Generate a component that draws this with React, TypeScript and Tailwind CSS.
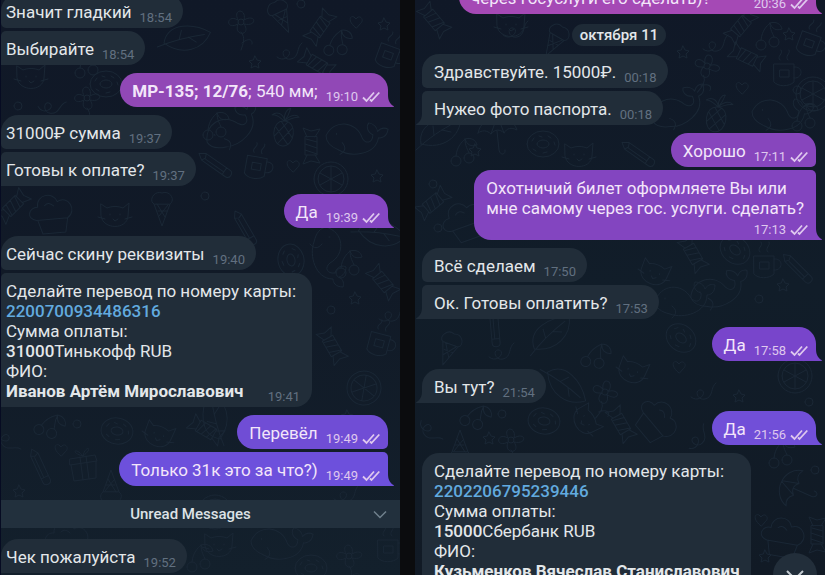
import type { ReactNode } from 'react'
import { clsx } from 'clsx'

type Position = 'single' | 'first' | 'last'

interface Message {
  id: string
  time: string
  content: ReactNode
  own?: boolean
  position?: Position
  // Extra classes: bubble tint and spacing to the previous message
  className?: string
  layout?: 'inline' | 'stacked' | 'overlay'
}

const DOODLES = {
  star: 'M0-6 2-2 6-1 3 2 4 6 0 4-4 6-3 2-6-1-2-2Z',
  heart: 'M0 6C-9-1-6-7-2-5L0-3C3-8 9-3 5 1Z',
  donut: 'M-16 0a16 13 0 1 0 32 0a16 13 0 1 0-32 0M-6 0a6 4 0 1 0 12 0a6 4 0 1 0-12 0M-11-3l2-3M-4-8l3 1M5-8l3 2M11-2l1 3M-10 5l3 2M0 9l4-1',
  gift: 'M-13-7 12-11 14-5-13-1ZM-12-1-9 15 13 12 13-5M-3-9 0 14M3-10 6 13M0-10C-8-20-13-13 0-10C2-21 12-19 0-10',
  pencil: 'M-4-16 0-22 4-16 4 13C4 18-4 18-4 13ZM-4-16 0-14 4-16M-4 9H4M-1-13V8',
  cone: 'M-8-4 0 18 8-4M-8-4C-14-7-8-18 0-15C8-18 14-8 8-4ZM-4 3 5 3M-5-4 3 9M6-3-3 8',
  pineapple: 'M0-7C14-7 12 18 0 18C-12 18-14-7 0-7M-8 0 5 16M-3-6 9 9M8 0-5 16M3-6-9 9M0-7C-2-15-9-16-13-12C-8-13-5-10 0-7C-2-14 2-20 5-20C4-15 3-12 0-7C5-14 11-15 14-12C8-12 6-9 0-7',
  flower: 'M-3 0a3 3 0 1 0 6 0a3 3 0 1 0-6 0M-3-2C-9-14 6-14 3-2C15-9 17 5 3 2C11 14-8 15-3 2C-16 9-15-9-3-2M0 10C5 16 2 22 0 28M1 21C8 15 12 18 11 22',
  candy: 'M-9-6 9-6 9 6-9 6ZM-9-4-17-9-15 0-18 8-9 4M9-4 17-9 15 0 18 8 9 4M-4-6-7 5M2-6-2 6M8-6 4 6',
  umbrella: 'M-19 3C-15-17 14-19 20 0C14-3 10-2 7 3C3-1-2-1-6 4C-10 0-15 0-19 3ZM0-13-6 4M1-13 7 3M0 1 2 20C3 26 9 25 8 20',
  slice: 'M-17 0a17 17 0 1 0 34 0a17 17 0 1 0-34 0M-13 0a13 13 0 1 0 26 0a13 13 0 1 0-26 0M0-13V13M-11-6 11 6M11-6-11 6',
  cloud: 'M-17 8C-28 6-24-6-15-5C-16-18 2-20 5-9C16-15 25 1 14 8M-17 8H14M-8-6C-5-9-2-8 1-5M-16 8-12 22 11 22 14 8',
  cat: 'M-14-10-8-6C-3-8 3-8 8-6L14-11 13 2C12 16-12 16-14 2ZM-5 0V1M5 0V1M-2 5 0 7 3 5M-17 3-10 5M17 3 10 5',
  cup: 'M-11-8H9V10C4 15-7 15-11 10ZM9-5C19-6 18 7 9 6M-5-12C-9-16-1-18-4-22M3-12C-1-16 6-18 4-22M-5-2H4V5H-5Z',
  whale: 'M-25 2C-20-16 2-18 11-2C16 4 22 1 21-7C14-9 13-15 15-18C20-18 24-15 25-11C28-16 32-16 35-15C35-7 30-5 27-5C27 13 3 19-10 14C-19 12-24 8-25 2ZM-15-2V-1M-8 6C-3 10-3 14-8 18',
  leaf: 'M-18 12C-22-9 3-17 22-14C21 5 4 18-18 12ZM-23 18C-9 5 2-2 17-10M-5 3-6-6M3-2 12 0',
  cherry: 'M-8 7a5 5 0 1 0 10 0a5 5 0 1 0-10 0M5 4a5 5 0 1 0 10 0a5 5 0 1 0-10 0M-3 2C-2-8 3-12 6-15C6-8 9-4 10-1M6-15C12-17 17-14 18-9C12-7 8-9 6-15',
  loop: 'M-12 5C-4 12 5 0-2-2C-9-3-6 9 2 7C11 5 7-5 13-9',
  ring: 'M-4 0a4 4 0 1 0 8 0a4 4 0 1 0-8 0',
}

type DoodleName = keyof typeof DOODLES
type Placement = [DoodleName, number, number, number]

const LEFT_DOODLES: Placement[] = [
  ['flower', 240, 22, 0], ['cone', 280, 16, -25], ['candy', 319, 27, -55], ['ring', 300, 4, 0],
  ['loop', 288, 52, 0], ['cherry', 332, 44, 10], ['star', 383, 24, 0], ['star', 254, 62, 0],
  ['heart', 355, 22, 0], ['leaf', 184, 38, 20], ['candy', 316, 64, 30], ['cup', 388, 54, 20],
  ['cat', 30, 76, 0], ['cherry', 82, 66, 0], ['donut', 105, 84, 0], ['loop', 50, 106, 20],
  ['ring', 17, 106, 0], ['flower', 86, 98, 0], ['whale', 228, 130, -25], ['pineapple', 283, 128, 5],
  ['whale', 350, 138, 10], ['candy', 310, 146, 90], ['pencil', 216, 166, -55], ['cup', 256, 165, 10],
  ['heart', 292, 166, 0], ['slice', 330, 179, 0], ['star', 376, 176, 0], ['cherry', 210, 128, 0],
  ['candy', 12, 206, -45], ['cloud', 52, 211, -5], ['cat', 114, 214, 0], ['cone', 161, 208, 0],
  ['ring', 204, 196, 0], ['pencil', 245, 230, -30], ['donut', 290, 260, 80], ['whale', 327, 252, 90],
  ['leaf', 379, 233, 40], ['candy', 382, 282, 50], ['star', 354, 298, 0], ['ring', 330, 310, 0],
  ['cherry', 343, 266, 0], ['loop', 390, 314, 0], ['candy', 331, 346, 60], ['cup', 379, 342, 15],
  ['slice', 363, 388, 10], ['star', 346, 416, 0], ['leaf', 214, 418, -70], ['cherry', 44, 425, 30],
  ['ring', 76, 424, 0], ['donut', 116, 431, 10], ['cat', 158, 434, 20], ['pencil', 40, 469, -25],
  ['gift', 82, 466, 0], ['star', 18, 491, 0], ['heart', 60, 450, 0], ['cone', 110, 488, 180],
  ['loop', 7, 440, 70], ['candy', 205, 430, 30], ['cloud', 68, 538, 0], ['whale', 275, 543, 10],
  ['flower', 348, 556, 0], ['cat', 218, 544, 0], ['cup', 388, 548, 0], ['donut', 310, 568, 0],
  ['cherry', 194, 560, 0], ['loop', 345, 494, 0], ['slice', 214, 512, 0],
]

const RIGHT_DOODLES: Placement[] = [
  ['candy', 19, 20, 50], ['loop', 100, 30, 0], ['cat', 96, 24, 0], ['cone', 140, 40, 30],
  ['candy', 326, 26, -50], ['cherry', 349, 38, 0], ['star', 268, 52, 0], ['loop', 300, 44, 0],
  ['star', 374, 34, 0], ['cup', 395, 42, 20], ['candy', 332, 57, 25], ['flower', 292, 66, 20],
  ['cup', 370, 72, 0], ['ring', 382, 90, 0], ['heart', 327, 88, 0], ['pineapple', 302, 114, 10],
  ['whale', 260, 110, -20], ['whale', 362, 114, 10], ['slice', 398, 94, 0], ['cherry', 385, 119, 0],
  ['leaf', 24, 132, 0], ['cherry', 44, 154, 0], ['donut', 128, 144, 0], ['cat', 164, 154, 0],
  ['umbrella', 82, 130, 0], ['star', 60, 150, 0], ['pencil', 225, 155, -55], ['ring', 18, 184, 0],
  ['candy', 18, 203, -40], ['cloud', 50, 218, -20], ['ring', 23, 228, 0], ['candy', 278, 254, 60],
  ['donut', 320, 250, 40], ['cup', 350, 264, 0], ['pencil', 384, 270, -45], ['whale', 265, 300, 0],
  ['cat', 240, 272, 20], ['whale', 300, 291, -10], ['star', 368, 285, 0], ['ring', 344, 299, 0],
  ['leaf', 135, 334, -10], ['pencil', 80, 330, -5], ['cone', 34, 348, 20], ['cherry', 176, 356, 20],
  ['loop', 86, 352, 0], ['donut', 266, 338, 40], ['cat', 218, 370, 20], ['heart', 264, 367, 0],
  ['star', 324, 396, 0], ['slice', 380, 376, 0], ['loop', 288, 392, 0], ['flower', 190, 392, 20],
  ['leaf', 150, 385, 70], ['ring', 394, 402, 0], ['cherry', 56, 416, 30], ['ring', 87, 414, 0],
  ['donut', 129, 421, 10], ['cat', 172, 420, 60], ['loop', 15, 430, 70], ['cone', 45, 448, 180],
  ['flower', 96, 440, 0], ['cloud', 245, 420, 50], ['star', 74, 438, 0], ['loop', 282, 438, -30],
  ['cherry', 362, 456, 0], ['umbrella', 378, 488, -60], ['ring', 400, 470, 0], ['cloud', 370, 535, 10],
  ['candy', 402, 535, 90], ['heart', 346, 520, 0], ['candy', 206, 424, 60], ['star', 350, 556, 0],
]

function Wallpaper({ items }: { items: Placement[] }) {
  return (
    <svg className="pointer-events-none absolute inset-0 h-full w-full" aria-hidden="true">
      <g fill="none" stroke="#1a2735" strokeLinecap="round" strokeLinejoin="round">
        {items.map(([name, x, y, angle], index) => (
          <path key={index} d={DOODLES[name]} transform={`translate(${x} ${y}) rotate(${angle})`} />
        ))}
      </g>
    </svg>
  )
}

function ReadChecks() {
  return (
    <svg
      className="h-3 w-[18px]"
      viewBox="0 0 18 12"
      fill="none"
      stroke="currentColor"
      strokeWidth="1.8"
      role="img"
      aria-label="Прочитано"
    >
      <path d="M1 6.5 4.5 10 12 1.5M8 8.5 9.5 10 17.3 1.5" />
    </svg>
  )
}

function Tail({ own }: { own?: boolean }) {
  return (
    <svg
      className={clsx('absolute bottom-0 h-3 w-1.5', own ? '-right-1.5' : '-left-1.5 -scale-x-100')}
      viewBox="0 0 6 12"
      fill="currentColor"
      aria-hidden="true"
    >
      <path d="M0 0C0 6 2 9 6 11.3L5.5 12H0Z" />
    </svg>
  )
}

function Bubble({ time, content, own, position = 'single', className, layout = 'inline' }: Message) {
  const hasTail = position !== 'first'
  const corners = own
    ? clsx('rounded-l-[17px]', position === 'last' ? 'rounded-tr-[5px]' : 'rounded-tr-[17px]', position === 'first' ? 'rounded-br-[5px]' : 'rounded-br-none')
    : clsx('rounded-r-[17px]', position === 'last' ? 'rounded-tl-[5px]' : 'rounded-tl-[17px]', position === 'first' ? 'rounded-bl-[5px]' : 'rounded-bl-none')

  return (
    <li
      className={clsx(
        'relative flex w-fit shrink-0 pt-2 pb-0.5',
        corners,
        own ? 'self-end pr-2 pl-3' : 'self-start bg-[#212d39] pl-[var(--inset)] text-[#212d39]',
        !own && (layout === 'overlay' ? 'pr-4' : 'pr-[11px]'),
        layout === 'stacked' ? 'flex-col' : 'items-end justify-between gap-2',
        className
      )}
    >
      {hasTail && <Tail own={own} />}
      <div
        className={clsx(
          'mb-1 text-[17px] leading-5 whitespace-nowrap',
          own ? 'text-[#f3e6fa]' : 'text-[#e3e7ea]',
          own && layout === 'stacked' && 'pr-1'
        )}
      >
        {content}
      </div>
      <div
        className={clsx(
          'flex items-center gap-1 text-[13px] leading-4',
          own ? 'text-[#dfc8ee]' : 'text-[#617080]',
          layout === 'stacked' && 'self-end',
          layout === 'overlay' && 'absolute right-3 bottom-0.5'
        )}
      >
        <time>{time}</time>
        {own && <ReadChecks />}
      </div>
    </li>
  )
}

interface PaymentProps {
  card: string
  amount: string
  bank: string
  name: string
}

function PaymentDetails({ card, amount, bank, name }: PaymentProps) {
  return (
    <>
      <p>Сделайте перевод по номеру карты:</p>
      <p><a href="#card" className="font-medium text-[#62aadf]">{card}</a></p>
      <p>Сумма оплаты:</p>
      <p><b className="font-medium">{amount}</b>{bank} RUB</p>
      <p>ФИО:</p>
      <p className="font-bold">{name}</p>
    </>
  )
}

const leftMessages: Message[] = [
  { id: 'l1', content: 'Значит гладкий', time: '18:54', position: 'first' },
  { id: 'l2', content: 'Выбирайте', time: '18:54', position: 'last', className: 'mt-[3px]' },
  { id: 'l3', content: <><b>МР-135; 12/76</b>; 540 мм;</>, time: '19:10', own: true, className: 'mt-2 bg-[#9148b6] text-[#9148b6]' },
  { id: 'l4', content: '31000₽ сумма', time: '19:37', position: 'first', className: 'mt-2' },
  { id: 'l5', content: 'Готовы к оплате?', time: '19:37', position: 'last', className: 'mt-[3px]' },
  { id: 'l6', content: 'Да', time: '19:39', own: true, className: 'mt-2 bg-[#8446c2] text-[#8446c2]' },
  { id: 'l7', content: 'Сейчас скину реквизиты', time: '19:40', position: 'first', className: 'mt-2' },
  {
    id: 'l8',
    content: <PaymentDetails card="2200700934486316" amount="31000" bank="Тинькофф" name="Иванов Артём Мирославович" />,
    time: '19:41',
    position: 'last',
    layout: 'overlay',
    className: 'mt-[3px]',
  },
  { id: 'l9', content: 'Перевёл', time: '19:49', own: true, position: 'first', className: 'mt-2 bg-[#704dd5] text-[#704dd5]' },
  { id: 'l10', content: 'Только 31к это за что?)', time: '19:49', own: true, position: 'last', className: 'mt-[3px] bg-[#6d50dc] text-[#6d50dc]' },
]

const rightMessages: Message[] = [
  { id: 'r1', content: 'Здравствуйте. 15000₽.', time: '00:18', position: 'first' },
  { id: 'r2', content: 'Нужео фото паспорта.', time: '00:18', position: 'last', className: 'mt-[3px]' },
  { id: 'r3', content: 'Хорошо', time: '17:11', own: true, position: 'first', className: 'mt-2 bg-[#8746bd] text-[#8746bd]' },
  {
    id: 'r4',
    content: <>Охотничий билет оформляете Вы или<br />мне самому через гос. услуги. сделать?</>,
    time: '17:13',
    own: true,
    position: 'last',
    layout: 'stacked',
    className: 'mt-[3px] bg-[#8345c0] text-[#8345c0]',
  },
  { id: 'r5', content: 'Всё сделаем', time: '17:50', position: 'first', className: 'mt-2' },
  { id: 'r6', content: 'Ок. Готовы оплатить?', time: '17:53', position: 'last', className: 'mt-[3px]' },
  { id: 'r7', content: 'Да', time: '17:58', own: true, className: 'mt-2 bg-[#7845cb] text-[#7845cb]' },
  { id: 'r8', content: 'Вы тут?', time: '21:54', className: 'mt-2' },
  { id: 'r9', content: 'Да', time: '21:56', own: true, className: 'mt-2 bg-[#714fd8] text-[#714fd8]' },
  {
    id: 'r10',
    content: <PaymentDetails card="2202206795239446" amount="15000" bank="Сбербанк" name="Кузьменков Вячеслав Станиславович" />,
    time: '21:57',
    layout: 'stacked',
    className: 'mt-2',
  },
]

export default function App() {
  return (
    <main className="flex h-screen overflow-hidden bg-[#0b0c0e] font-['Roboto','Noto_Sans',sans-serif]">
      <section
        aria-label="Первый чат"
        className="relative flex-[399] overflow-hidden border-l border-[#060b22] bg-linear-to-b from-[#101827] via-[#111a27] to-[#13202c] [--inset:5px]"
      >
        <Wallpaper items={LEFT_DOODLES} />
        <div className="relative -mt-1.5 flex flex-col">
          <ul className="flex flex-col pr-3">
            {leftMessages.map((message) => (
              <Bubble {...message} key={message.id} />
            ))}
          </ul>
          <button
            type="button"
            className="mt-3.5 flex h-7 items-center bg-[#22303d] pr-3 pl-2 text-[15px] font-medium text-[#dde2e6]"
          >
            <span className="flex-1 text-center">Unread Messages</span>
            <svg className="h-4 w-4 text-[#70808d]" viewBox="0 0 16 16" fill="none" stroke="currentColor" strokeWidth="1.5" aria-hidden="true">
              <path d="M2 5.5 8 11.5 14 5.5" />
            </svg>
          </button>
          <ul className="mt-[11px] flex flex-col pr-3">
            <Bubble id="l11" content="Чек пожалуйста" time="19:52" />
          </ul>
        </div>
      </section>

      <div className="w-[15px] shrink-0" />

      <section
        aria-label="Второй чат"
        className="relative flex-[410] overflow-hidden bg-linear-to-b from-[#101827] via-[#111d29] to-[#111a25] [--inset:12px]"
      >
        <Wallpaper items={RIGHT_DOODLES} />
        <div className="relative -mt-5 flex flex-col pr-[9px] pl-[7px]">
          <ul className="flex flex-col">
            <Bubble
              id="r0"
              content="через госуслуги его сделать)?"
              time="20:36"
              own
              className="min-w-[357px] bg-[#a549b5] text-[#a549b5]"
            />
          </ul>
          <h2 className="mt-2.5 mb-2 self-center rounded-full bg-[#1e2a36] px-2 text-[15px] leading-[22px] font-medium text-[#e3e7ea]">
            октября 11
          </h2>
          <ul className="flex flex-col">
            {rightMessages.map((message) => (
              <Bubble {...message} key={message.id} />
            ))}
          </ul>
        </div>
        <button
          type="button"
          aria-label="Вниз"
          className="absolute right-2 -bottom-[22px] flex h-11 w-11 items-center justify-center rounded-full bg-[#222e3a] text-[#c3cad0]"
        >
          <svg className="h-5 w-5" viewBox="0 0 20 20" fill="none" stroke="currentColor" strokeWidth="2" aria-hidden="true">
            <path d="M2 6 10 14 18 6" />
          </svg>
        </button>
      </section>
    </main>
  )
}
